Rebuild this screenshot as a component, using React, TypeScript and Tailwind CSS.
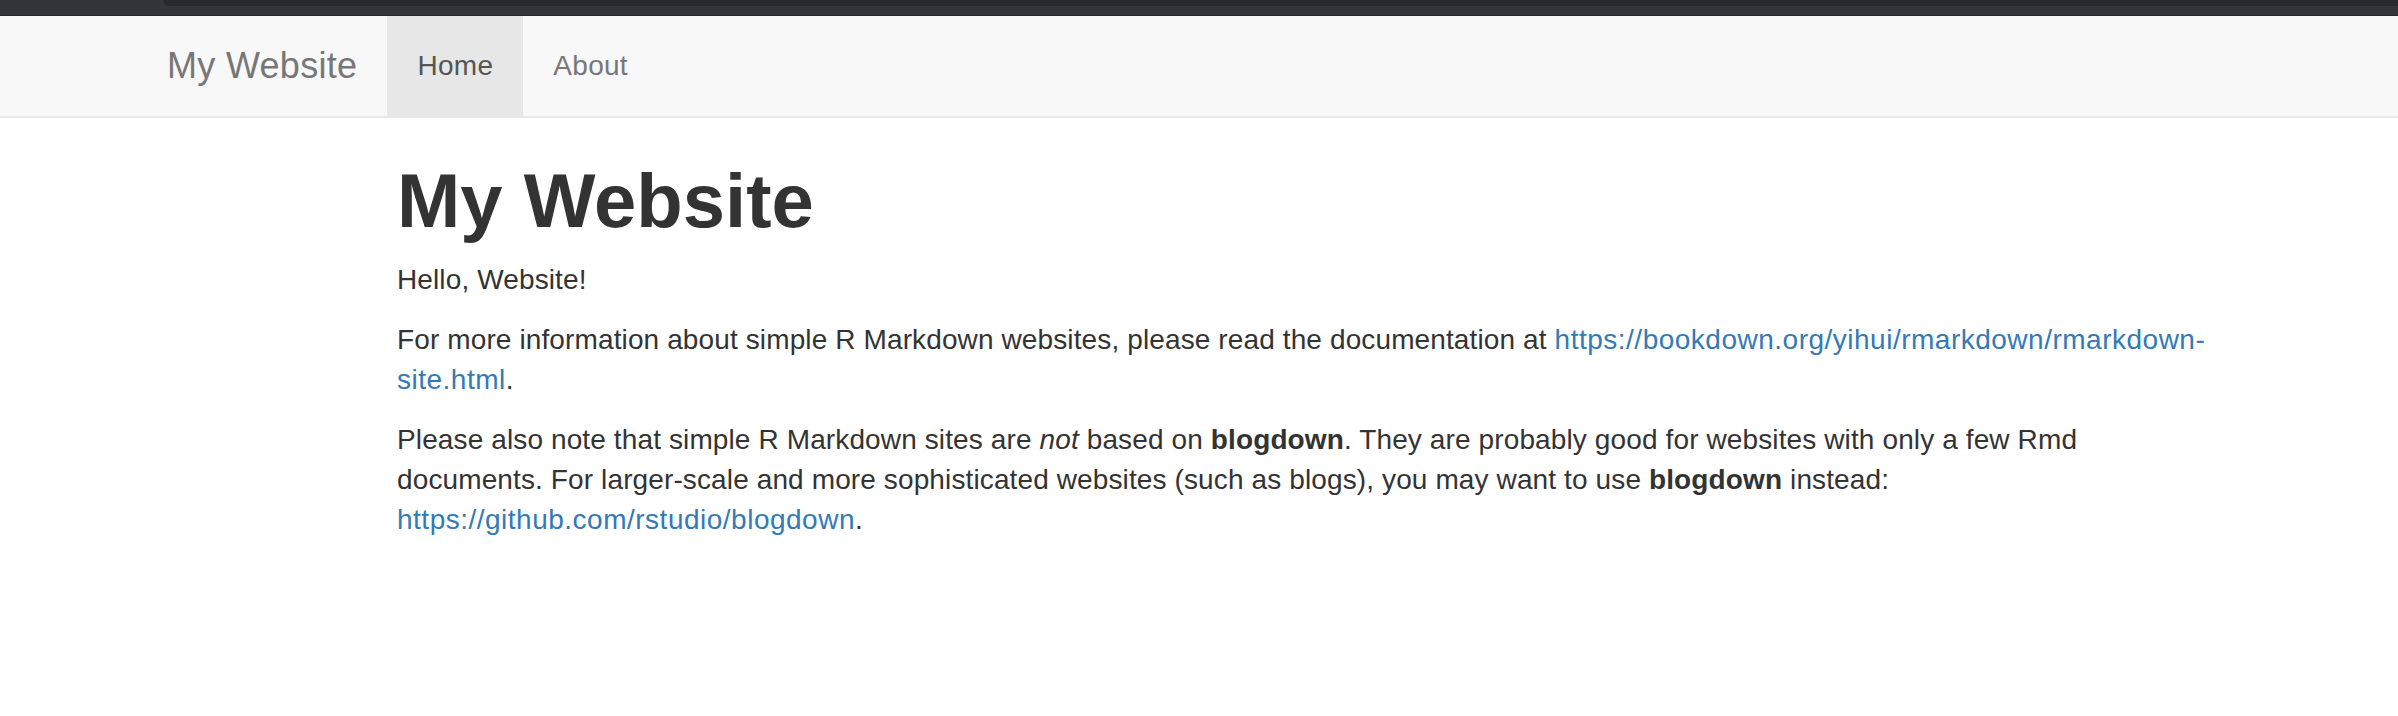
export default function App() {
  return (
    <div className="min-h-[716px] bg-white font-['Liberation_Sans',Arial,sans-serif] text-[#333]">
      {/* window chrome strip */}
      <div className="h-4 bg-[#32363a] relative overflow-hidden border-b border-[#24272a]">
        <div className="absolute left-[163px] right-0 top-0 h-[6px] bg-[#262a2d] rounded-bl-[12px]" />
      </div>

      <nav className="h-[102px] bg-[#f8f8f8] border-b-2 border-[#e7e7e7]">
        <div className="flex h-[100px] pl-[137px] tracking-[0.3px]">
          <a className="flex items-center px-[30px] text-[36px] text-[#777]">My Website</a>
          <ul className="flex">
            <li className="flex items-center px-[30px] bg-[#e7e7e7] text-[28px] text-[#555]">Home</li>
            <li className="flex items-center px-[30px] text-[28px] text-[#777]">About</li>
          </ul>
        </div>
      </nav>

      <main className="ml-[397px] w-[1818px] text-[28px] leading-[40px]">
        <h1 className="mt-[41px] mb-[17px] text-[76px] leading-[84px] font-bold">My Website</h1>
        <div className="tracking-[0.12px]">
          <p className="mb-[20px]">Hello, Website!</p>
          <p className="mb-[20px]">
            For more information about simple R Markdown websites, please read the documentation at{" "}
            <a className="text-[#337ab7] tracking-[0.5px]">https://bookdown.org/yihui/rmarkdown/rmarkdown-site.html</a>.
          </p>
          <p className="mb-[20px]">
            Please also note that simple R Markdown sites are <em>not</em> based on <strong>blogdown</strong>. They
            are probably good for websites with only a few Rmd documents. For larger-scale and more sophisticated
            websites (such as blogs), you may want to use <strong>blogdown</strong> instead:{" "}
            <a className="text-[#337ab7] tracking-[0.5px]">https://github.com/rstudio/blogdown</a>.
          </p>
        </div>
      </main>
    </div>
  );
}
